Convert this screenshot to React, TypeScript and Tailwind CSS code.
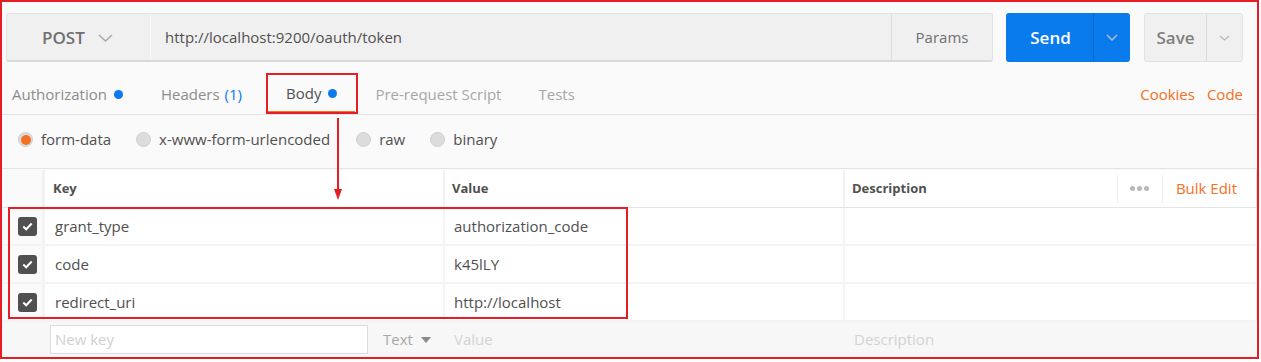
import React from "react";

const font = { fontFamily: '"Open Sans", "Noto Sans", sans-serif' };

function Chevron({ w, h, color, sw = 1.5 }: { w: number; h: number; color: string; sw?: number }) {
  return (
    <svg width={w} height={h} viewBox={`0 0 ${w} ${h}`} fill="none">
      <path d={`M1 1 L${w / 2} ${h - 1} L${w - 1} 1`} stroke={color} strokeWidth={sw} />
    </svg>
  );
}

function Check() {
  return (
    <div className="w-[19px] h-[19px] rounded-[3px] bg-[#505050] flex items-center justify-center">
      <svg width="11" height="9" viewBox="0 0 11 9" fill="none">
        <path d="M1.3 4.6 L4.2 7.3 L9.7 1.5" stroke="#fff" strokeWidth="2" />
      </svg>
    </div>
  );
}

function Radio({ on }: { on?: boolean }) {
  return (
    <div className="w-[15px] h-[15px] rounded-full bg-[#dcdcdc] border border-[#cfcfcf] flex items-center justify-center">
      {on && <div className="w-[10px] h-[10px] rounded-full bg-[#f47023]" />}
    </div>
  );
}

const rows = [
  ["grant_type", "authorization_code"],
  ["code", "k45lLY"],
  ["redirect_uri", "http://localhost"],
];

export default function App() {
  return (
    <div className="relative w-[1261px] h-[362px] bg-white overflow-hidden" style={font}>
      <div className="w-[1259px] h-[359px] border-2 border-[#e81c24] bg-[#fafafa] flex flex-col overflow-hidden">
        {/* top bar */}
        <div className="flex mt-[11px] h-[49px] pl-[4px] pr-[14px]">
          <div className="flex flex-1 rounded-[3px] border border-[#e2e2e2] border-b-2 border-b-[#dadada] bg-[#f0f0f0]">
            <div className="w-[144px] flex items-center pl-[35px] pt-[1px] border-r border-[#f8f8f8]">
              <span className="text-[17px] font-semibold text-[#707070]">POST</span>
              <span className="ml-[13px] mt-[1px]">
                <Chevron w={15} h={8} color="#a8a8a8" />
              </span>
            </div>
            <div className="flex-1 flex items-center pl-[14px] pt-[1px] text-[15px] text-[#505050]">
              http://localhost:9200/oauth/token
            </div>
            <div className="w-[101px] flex items-center justify-center pt-[1px] border-l border-[#dedede] text-[15px] text-[#707070]">
              Params
            </div>
          </div>
          <div className="ml-[13px] w-[124px] flex rounded-[3px] bg-[#097bed]">
            <div className="w-[87px] flex items-center justify-center text-[17px] font-semibold text-white pl-[2px] pt-[1px]">
              Send
            </div>
            <div className="flex-1 flex items-center justify-center border-l border-[#0b6bcc]">
              <Chevron w={12} h={7} color="#a9b9cc" sw={1.6} />
            </div>
          </div>
          <div className="ml-[14px] w-[99px] flex rounded-[3px] bg-[#f0f0f0] border border-[#e2e2e2]">
            <div className="w-[61px] flex items-center justify-center text-[17px] font-semibold text-[#808080] pt-[1px]">
              Save
            </div>
            <div className="flex-1 flex items-center justify-center border-l border-[#dadada]">
              <Chevron w={11} h={6} color="#b8b8b8" sw={1.2} />
            </div>
          </div>
        </div>

        {/* tabs */}
        <div className="flex items-end h-[53px] border-b border-[#e4e4e4] text-[15px]">
          <div className="h-[38px] pb-[2px] flex items-center ml-[10px] text-[#8c8c8c]">
            Authorization
            <span className="ml-[7px] w-[9px] h-[9px] rounded-full bg-[#097bed]" />
          </div>
          <div className="h-[38px] pb-[2px] flex items-center ml-[38px] text-[#8c8c8c]">
            Headers <span className="ml-[5px] text-[#097bed]">(1)</span>
          </div>
          <div className="h-[38px] flex items-center ml-[26px] px-[18px] text-[#505050] border-b-[3px] border-[#f47023]">
            Body
            <span className="ml-[7px] w-[9px] h-[9px] rounded-full bg-[#097bed]" />
          </div>
          <div className="h-[38px] pb-[2px] flex items-center ml-[20px] text-[#a6a6a6]">Pre-request Script</div>
          <div className="h-[38px] pb-[2px] flex items-center ml-[37px] text-[#a6a6a6]">Tests</div>
          <div className="flex-1" />
          <div className="h-[38px] pb-[2px] flex items-center text-[#f47023]">Cookies</div>
          <div className="h-[38px] pb-[2px] flex items-center ml-[12px] mr-[14px] text-[#f47023]">Code</div>
        </div>

        {/* body type radios */}
        <div className="flex items-center h-[54px] pb-[4px] border-b border-[#e4e4e4] text-[15px] text-[#505050]">
          <div className="ml-[16px] flex items-center">
            <Radio on />
            <span className="ml-[8px]">form-data</span>
          </div>
          <div className="ml-[25px] flex items-center">
            <Radio />
            <span className="ml-[8px]">x-www-form-urlencoded</span>
          </div>
          <div className="ml-[26px] flex items-center">
            <Radio />
            <span className="ml-[8px]">raw</span>
          </div>
          <div className="ml-[25px] flex items-center">
            <Radio />
            <span className="ml-[8px]">binary</span>
          </div>
        </div>

        {/* table header */}
        <div className="flex h-[39px] pt-[1px] border-b border-[#e4e4e4] text-[13px] font-bold text-[#505050]">
          <div className="w-[43px] border-r-[3px] border-[#f2f2f2]" />
          <div className="w-[400px] bg-white border-r-2 border-[#f2f2f2] flex items-center pl-[8px]">Key</div>
          <div className="w-[400px] bg-white border-r-2 border-[#f2f2f2] flex items-center pl-[7px]">Value</div>
          <div className="flex-1 bg-white border-r border-[#e4e4e4] flex items-center pl-[7px]">
            <span className="flex-1">Description</span>
            <div className="h-[30px] w-[46px] border-l border-r border-[#f0f0f0] flex items-center justify-center gap-[2px]">
              <span className="w-[5px] h-[5px] rounded-full bg-[#b8b8b8]" />
              <span className="w-[5px] h-[5px] rounded-full bg-[#b8b8b8]" />
              <span className="w-[5px] h-[5px] rounded-full bg-[#b8b8b8]" />
            </div>
            <span className="ml-[13px] mr-[19px] text-[15px] font-normal text-[#f47023]">Bulk Edit</span>
          </div>
        </div>

        {/* rows */}
        {rows.map(([k, v]) => (
          <div key={k} className="flex h-[38px] border-b-2 border-[#f4f4f4] text-[15px] text-[#505050]">
            <div className="w-[43px] border-r-[3px] border-[#f4f4f4] flex items-center pl-[16px]">
              <Check />
            </div>
            <div className="w-[400px] bg-white border-r-2 border-[#f4f4f4] flex items-center pl-[10px] pt-[1px]">{k}</div>
            <div className="w-[400px] bg-white border-r-2 border-[#f4f4f4] flex items-center pl-[9px] pt-[1px]">{v}</div>
            <div className="flex-1 bg-white border-r border-[#ececec]" />
          </div>
        ))}

        {/* new row */}
        <div className="flex flex-1 bg-[#f7f7f7] text-[15px] mr-[1px]">
          <div className="w-[43px]" />
          <div className="w-[400px] flex items-center pl-[5px]">
            <div className="w-[318px] h-[29px] bg-white border border-[#dcdcdc] flex items-center pl-[4px] text-[#d0d0d0]">
              New key
            </div>
            <span className="ml-[15px] text-[#a8a8a8]">Text</span>
            <svg className="ml-[8px]" width="10" height="6" viewBox="0 0 10 6">
              <path d="M0 0 L10 0 L5 6 Z" fill="#8a8a8a" />
            </svg>
          </div>
          <div className="w-[400px] flex items-center pl-[9px] text-[#d3d3d3]">Value</div>
          <div className="flex-1 flex items-center pl-[9px] text-[#d3d3d3]">Description</div>
        </div>
      </div>

      {/* annotations */}
      <div className="absolute left-[266px] top-[73px] w-[92px] h-[41px] border-2 border-[#e81c24]" />
      <div className="absolute left-[8px] top-[207px] w-[620px] h-[112px] border-2 border-[#e81c24]" />
      <svg className="absolute left-[330px] top-[116px]" width="16" height="86" viewBox="0 0 16 86">
        <line x1="8" y1="2" x2="8" y2="76" stroke="#e81c24" strokeWidth="2" />
        <path d="M4 73 L12 73 L8 84 Z" fill="#e81c24" />
      </svg>
    </div>
  );
}
